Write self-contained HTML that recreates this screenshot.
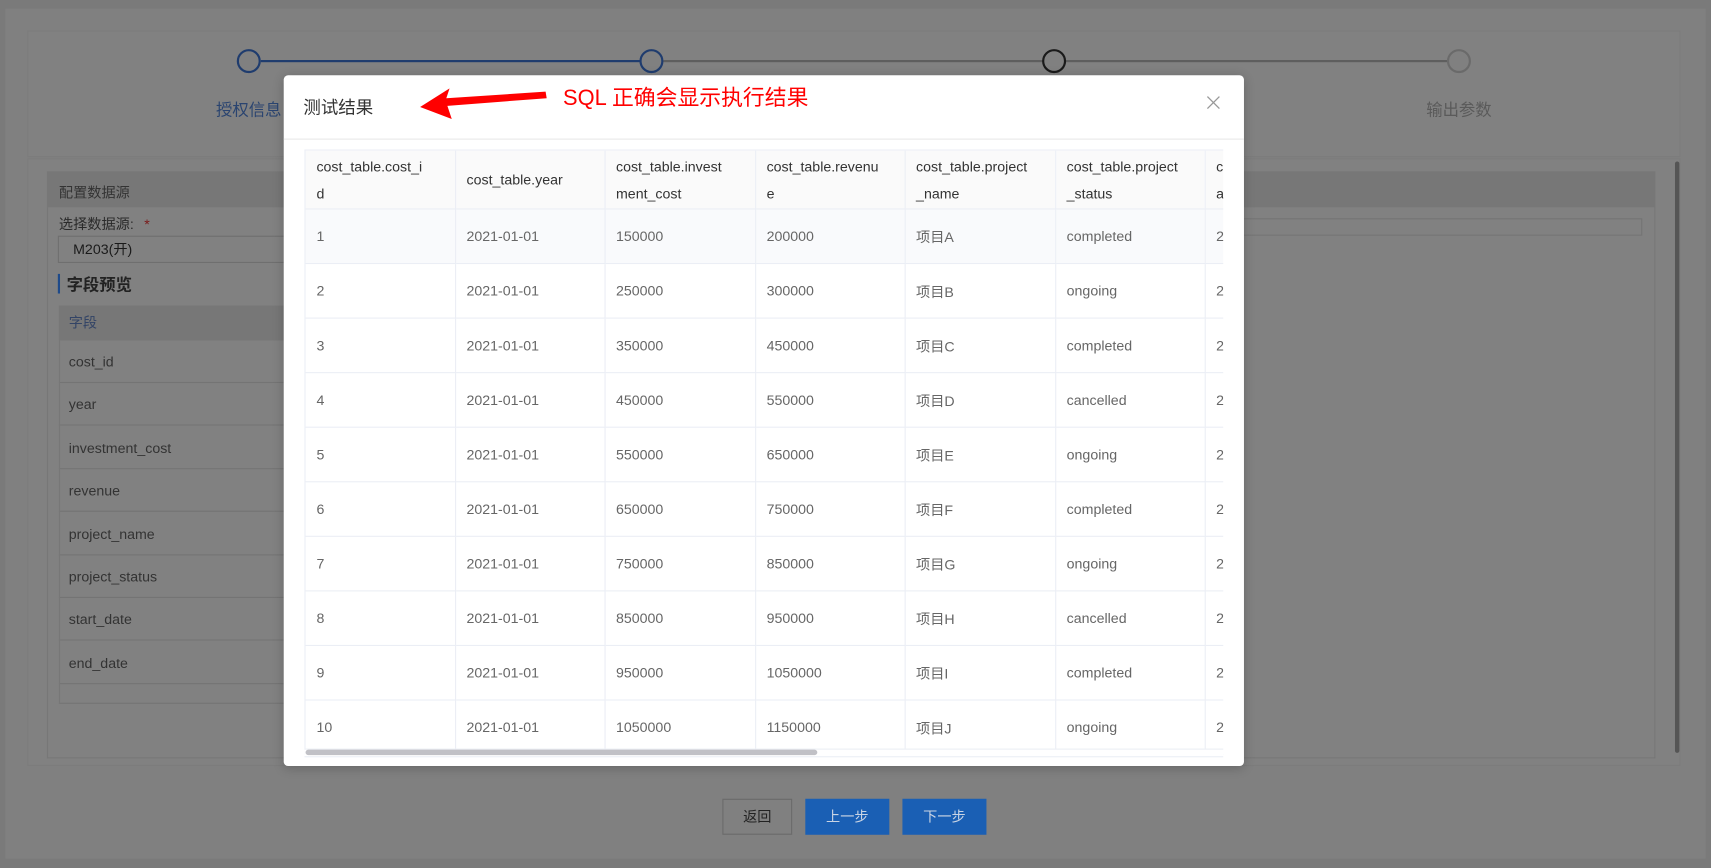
<!DOCTYPE html>
<html><head><meta charset="utf-8"><style>
html,body{margin:0;padding:0;width:1711px;height:868px;overflow:hidden;background:#7a7a7a;font-family:"Liberation Sans","Noto Sans CJK SC",sans-serif;}
#s{position:absolute;left:0;top:0;width:1568px;height:795px;transform:scale(1.09120);transform-origin:0 0;}
.a{position:absolute;}
.c{position:absolute;width:22px;height:22px;border-radius:50%;box-sizing:border-box;border:2px solid #1f3c6e;background:#808080;top:45px;}
.fr{position:absolute;left:54px;width:206px;height:39px;border-bottom:1px solid #747474;font-size:13px;color:#333;line-height:39px;padding-left:9px;box-sizing:border-box;}
table{border-collapse:collapse;table-layout:fixed;}
td{border-right:1px solid #ebeef5;border-bottom:1px solid #ebeef5;font-size:13px;color:#666;padding:0 10px;height:49px;vertical-align:middle;overflow:hidden;white-space:nowrap;}
th{border-right:1px solid #ebeef5;border-bottom:1px solid #ebeef5;font-size:13px;color:#333;font-weight:normal;text-align:left;padding:0 10px;height:53px;line-height:25px;background:#fafafa;white-space:nowrap;overflow:hidden;vertical-align:middle;}
</style></head><body><div id="s">
<div class="a" style="left:5px;top:8px;width:1558px;height:779px;background:#808080;"></div>
<div class="a" style="left:25px;top:28px;width:1515px;height:116px;background:#818181;border:1px solid #7c7c7c;box-sizing:border-box;"></div>
<div class="a" style="left:25px;top:145px;width:1515px;height:557px;background:#818181;border:1px solid #7c7c7c;box-sizing:border-box;"></div>
<!-- steps -->
<div class="a" style="left:239px;top:55px;width:358px;height:2px;background:#1f3c6e;"></div>
<div class="a" style="left:608px;top:55px;width:720px;height:2px;background:#5e5e5e;"></div>
<div class="c" style="left:217px;"></div>
<div class="c" style="left:586px;"></div>
<div class="c" style="left:955px;border-color:#1a1a1a;"></div>
<div class="c" style="left:1326px;border-color:#6a6a6a;"></div>
<div class="a" style="left:198px;top:90px;font-size:15px;color:#2a4470;">授权信息</div>
<div class="a" style="left:1307px;top:90px;font-size:15px;color:#5a5a5a;">输出参数</div>
<!-- left content -->
<div class="a" style="left:43px;top:157px;width:1474px;height:33px;background:#777;"></div>
<div class="a" style="left:43px;top:190px;width:1474px;height:505px;border:1px solid #777;border-top:none;box-sizing:border-box;"></div>
<div class="a" style="left:54px;top:166px;font-size:13px;color:#333;">配置数据源</div>
<div class="a" style="left:54px;top:195px;font-size:13px;color:#2a2a2a;">选择数据源: <span style="color:#7a1a1a;margin-left:6px">*</span></div>
<div class="a" style="left:53px;top:216px;width:220px;height:25px;border:1px solid #6f6f6f;box-sizing:border-box;font-size:13px;color:#1a1a1a;line-height:23px;padding-left:13px;">M203(开)</div>
<div class="a" style="left:1128px;top:200px;width:377px;height:16px;border:1px solid #747474;box-sizing:border-box;"></div>
<div class="a" style="left:53px;top:251px;width:2px;height:18px;background:#1e4a8a;"></div>
<div class="a" style="left:61px;top:250px;font-size:15px;font-weight:bold;color:#222;">字段预览</div>
<div class="a" style="left:54px;top:280px;width:206px;height:32px;background:#777;font-size:13px;color:#334466;line-height:32px;padding-left:9px;box-sizing:border-box;">字段</div>
<div class="fr" style="top:312px">cost_id</div>
<div class="fr" style="top:351px">year</div>
<div class="fr" style="top:391px">investment_cost</div>
<div class="fr" style="top:430px">revenue</div>
<div class="fr" style="top:470px">project_name</div>
<div class="fr" style="top:509px">project_status</div>
<div class="fr" style="top:548px">start_date</div>
<div class="fr" style="top:588px">end_date</div>
<div class="fr" style="top:627px;height:18px;"></div>
<div class="a" style="left:54px;top:280px;width:1px;height:365px;background:#777;"></div>
<div class="a" style="left:1535px;top:148px;width:4px;height:542px;background:#555;border-radius:2px;"></div>
<!-- buttons -->
<div class="a" style="left:662px;top:732px;width:64px;height:33px;border:1px solid #6a6a6a;box-sizing:border-box;font-size:13px;color:#222;text-align:center;line-height:31px;">返回</div>
<div class="a" style="left:738px;top:732px;width:77px;height:33px;background:#1a5fb4;font-size:13px;color:#c9d4e4;text-align:center;line-height:33px;">上一步</div>
<div class="a" style="left:827px;top:732px;width:77px;height:33px;background:#1a5fb4;font-size:13px;color:#c9d4e4;text-align:center;line-height:33px;">下一步</div>
<!-- modal -->
<div class="a" style="left:260px;top:69px;width:880px;height:633px;background:#fff;border-radius:4px;box-shadow:0 2px 10px rgba(0,0,0,.2);overflow:hidden;">
 <div class="a" style="left:18px;top:16px;font-size:16px;color:#333;">测试结果</div>
 <svg class="a" style="left:846px;top:19px;" width="12" height="12"><path d="M0.5 0.5L11.5 11.5M11.5 0.5L0.5 11.5" stroke="#999" stroke-width="1.2"/></svg>
 <div class="a" style="left:0;top:58px;width:880px;height:1px;background:#e8e8e8;"></div>
 <div class="a" style="left:19px;top:68px;width:842px;height:555px;overflow:hidden;border:1px solid #ebeef5;box-sizing:border-box;border-right:none;">
 <table style="width:960px;">
 <colgroup><col style="width:137px"><col style="width:137px"><col style="width:138px"><col style="width:137px"><col style="width:138px"><col style="width:137px"><col style="width:136px"></colgroup>
 <tr><th>cost_table.cost_i<br>d</th><th>cost_table.year</th><th>cost_table.invest<br>ment_cost</th><th>cost_table.revenu<br>e</th><th>cost_table.project<br>_name</th><th>cost_table.project<br>_status</th><th>cost_table.start_d<br>ate</th></tr>
 <tr style="background:#f9fafc"><td>1</td><td>2021-01-01</td><td>150000</td><td>200000</td><td>项目A</td><td>completed</td><td>2021-01-01</td></tr>
 <tr><td>2</td><td>2021-01-01</td><td>250000</td><td>300000</td><td>项目B</td><td>ongoing</td><td>2021-01-01</td></tr>
 <tr><td>3</td><td>2021-01-01</td><td>350000</td><td>450000</td><td>项目C</td><td>completed</td><td>2021-01-01</td></tr>
 <tr><td>4</td><td>2021-01-01</td><td>450000</td><td>550000</td><td>项目D</td><td>cancelled</td><td>2021-01-01</td></tr>
 <tr><td>5</td><td>2021-01-01</td><td>550000</td><td>650000</td><td>项目E</td><td>ongoing</td><td>2021-01-01</td></tr>
 <tr><td>6</td><td>2021-01-01</td><td>650000</td><td>750000</td><td>项目F</td><td>completed</td><td>2021-01-01</td></tr>
 <tr><td>7</td><td>2021-01-01</td><td>750000</td><td>850000</td><td>项目G</td><td>ongoing</td><td>2021-01-01</td></tr>
 <tr><td>8</td><td>2021-01-01</td><td>850000</td><td>950000</td><td>项目H</td><td>cancelled</td><td>2021-01-01</td></tr>
 <tr><td>9</td><td>2021-01-01</td><td>950000</td><td>1050000</td><td>项目I</td><td>completed</td><td>2021-01-01</td></tr>
 <tr><td>10</td><td>2021-01-01</td><td>1050000</td><td>1150000</td><td>项目J</td><td>ongoing</td><td>2021-01-01</td></tr>
 </table>
 </div>
 <div class="a" style="left:19px;top:617px;width:842px;height:6px;background:#fff;border-top:1px solid #ebeef5;border-bottom:1px solid #ebeef5;"></div>
 <div class="a" style="left:20px;top:618px;width:469px;height:5px;background:#c1c1c6;border-radius:3px;"></div>
</div>
<!-- annotation -->
<svg class="a" style="left:380px;top:75px;" width="130" height="40"><polygon points="5,23 32,6 29,15 120,9 121,15 30,22 34,34" fill="#f00"/></svg>
<div class="a" style="left:516px;top:73px;font-size:20px;color:#f00;white-space:nowrap;">SQL 正确会显示执行结果</div>
</div></body></html>
